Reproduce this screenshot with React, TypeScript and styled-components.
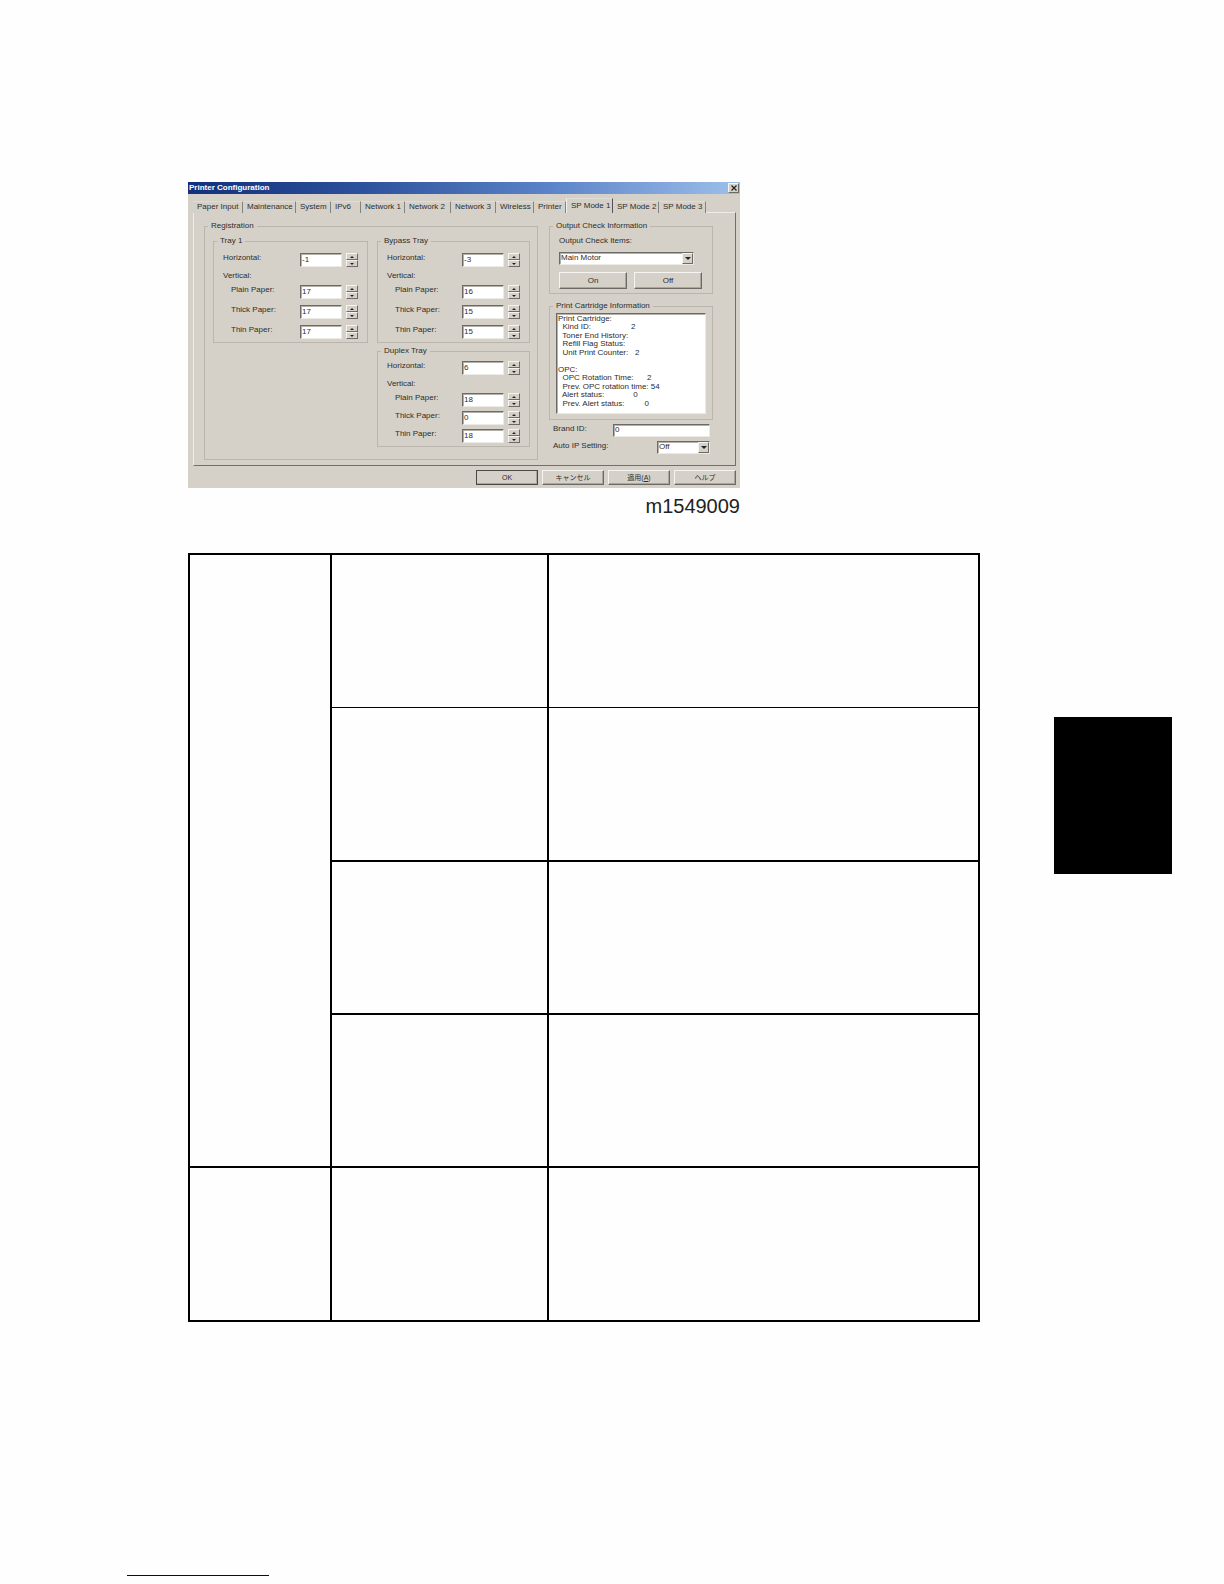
import React, { useId, useState } from "react";
import styled, { createGlobalStyle, css } from "styled-components";

const face = "#d5d1c9";
const shade = "#85827c";
const ink = "#2e2d2b";
const uiFont = `"Liberation Sans", Arial, "Noto Sans CJK JP", sans-serif`;

const GlobalStyle = createGlobalStyle`
  *, *::before, *::after { box-sizing: border-box; }
  body { margin: 0; background: #fefefe; font-family: ${uiFont}; }
  button, input, select { font: inherit; color: inherit; margin: 0; }
`;

const raised = css`
  border: 1px solid;
  border-color: #f6f4f0 #6d6a65 #6d6a65 #f6f4f0;
  background: ${face};
`;

const sunken = css`
  border: 1px solid;
  border-color: #6d6a65 #eceae5 #eceae5 #6d6a65;
  box-shadow: inset 1px 1px 0 #b3b0aa;
  background: #fff;
`;

const Page = styled.div`
  display: flex;
  flex-direction: column;
  min-height: 100vh;
`;

const Body = styled.div`
  flex: 1;
  display: grid;
  grid-template-columns: minmax(0, 1fr) 118px;
  column-gap: 74px;
  align-items: start;
  padding: 182px 52px 0 188px;
`;

const ThumbIndex = styled.aside`
  height: 157px;
  margin-top: 535px;
  background: #000;
`;

const Figure = styled.figure`
  margin: 0;
  max-width: 552px;
`;

const Caption = styled.figcaption`
  margin-top: 6px;
  font-size: 20px;
  line-height: 24px;
  text-align: right;
  color: #222;
`;

const Dialog = styled.section`
  background: ${face};
  color: ${ink};
  font-size: 8px;
  line-height: 10px;
`;

const TitleBar = styled.header`
  display: flex;
  align-items: center;
  justify-content: space-between;
  height: 12px;
  padding: 0 1px;
  background: linear-gradient(90deg, #12307c 0%, #2b4f9a 30%, #5b82c8 65%, #9dbfea 100%);
`;

const Title = styled.h1`
  margin: 0;
  font-size: 8px;
  line-height: 10px;
  font-weight: 700;
  color: #fff;
`;

const CloseButton = styled.button`
  ${raised}
  display: grid;
  place-items: center;
  width: 11px;
  height: 10px;
  padding: 0;
`;

const TabList = styled.div`
  display: grid;
  grid-template-columns: 50fr 53fr 35fr 30fr 44fr 46fr 45fr 38fr 32fr 47fr 46fr 47fr 30fr;
  align-items: end;
  height: 19px;
  margin: 0 4px -1px 5px;
`;

const Tab = styled.button<{ $active: boolean }>`
  height: ${(p) => (p.$active ? 15 : 12)}px;
  padding: 0 0 1px 4px;
  border: 0;
  border-right: 1px solid ${shade};
  border-top: 1px solid #e0ddd7;
  background: ${face};
  text-align: left;
  white-space: nowrap;
  ${(p) =>
    p.$active &&
    css`
      border-left: 1px solid #f2f0ec;
      border-right-color: #55534f;
      position: relative;
    `}
`;

const Panel = styled.div`
  display: grid;
  grid-template-columns: minmax(0, 334fr) minmax(0, 164fr);
  column-gap: 11px;
  margin: 0 4px 0 5px;
  padding: 8px 22px 5px 10px;
  border: 1px solid;
  border-color: #efede8 #73706b #73706b #efede8;
`;

const Group = styled.fieldset`
  min-width: 0;
  margin: 0;
  padding: 0;
  border: 1px solid #bab6ae;
`;

const Legend = styled.legend`
  margin-left: 3px;
  padding: 0 3px;
  line-height: 10px;
`;

const Registration = styled.div`
  display: grid;
  grid-template-columns: minmax(0, 155fr) minmax(0, 153fr);
  column-gap: 9px;
  align-items: start;
  padding: 5px 7px 12px 8px;
`;

const Stack = styled.div<{ $gap: number }>`
  display: flex;
  flex-direction: column;
  gap: ${(p) => p.$gap}px;
`;

const TrayFields = styled.div<{ $tight?: boolean }>`
  display: flex;
  flex-direction: column;
  gap: 4px;
  padding: ${(p) => (p.$tight ? 5 : 7)}px 9px 3px;
`;

const SizeFields = styled.div<{ $tight?: boolean }>`
  display: flex;
  flex-direction: column;
  gap: ${(p) => (p.$tight ? 4 : 6)}px;
  padding-left: 8px;
`;

const FieldRow = styled.div`
  display: grid;
  grid-template-columns: minmax(0, 1fr) 42px 12px;
  column-gap: 4px;
  align-items: start;
  white-space: nowrap;
`;

const TextField = styled.input`
  ${sunken}
  width: 100%;
  height: 14px;
  padding: 0 1px 2px;
  border-radius: 0;
`;

const Spinner = styled.span`
  display: grid;
  grid-template-rows: 7px 7px;
`;

const SpinButton = styled.button`
  ${raised}
  display: grid;
  place-items: center;
  padding: 0;
`;

const OutputFields = styled.div`
  display: flex;
  flex-direction: column;
  padding: 5px 9px 4px;
`;

const SelectBox = styled.span<{ $width: number }>`
  ${sunken}
  display: flex;
  position: relative;
  width: ${(p) => p.$width}px;
  height: 13px;
`;

const Select = styled.select`
  flex: 1;
  min-width: 0;
  padding: 0 12px 1px 1px;
  border: 0;
  background: transparent;
  appearance: none;
`;

const SelectArrow = styled.span`
  ${raised}
  position: absolute;
  top: 0;
  right: 0;
  display: grid;
  place-items: center;
  width: 11px;
  height: 11px;
  pointer-events: none;
`;

const ButtonPair = styled.div`
  display: grid;
  grid-template-columns: 68px 68px;
  column-gap: 7px;
  margin-top: 7px;
`;

const PushButton = styled.button<{ $tall?: boolean; $primary?: boolean }>`
  ${raised}
  height: ${(p) => (p.$tall ? 17 : 15)}px;
  padding: 0;
  font-size: ${(p) => (p.$tall ? 8 : 7)}px;
  line-height: 10px;
  box-shadow: inset -1px -1px 0 #aaa69f;
  ${(p) => p.$primary && css`border-color: #4a4845;`}
`;

const Readout = styled.ul`
  ${sunken}
  display: grid;
  grid-auto-rows: 1fr;
  height: 101px;
  margin: 2px 6px 5px;
  padding: 1px 1px 5px;
  list-style: none;
  line-height: 8px;
  white-space: pre;
`;

const SettingRow = styled.div`
  display: flex;
  justify-content: space-between;
  align-items: start;
  height: 13px;
  padding: 0 3px 0 4px;

  label { line-height: 10px; }
`;

const BrandField = styled(TextField)`
  width: 97px;
  height: 13px;
`;

const DialogFooter = styled.footer`
  display: grid;
  grid-template-columns: repeat(4, 62px);
  column-gap: 4px;
  justify-content: end;
  padding: 4px 4px 3px;
`;

const Spec = styled.table`
  width: 100%;
  margin-top: 35px;
  table-layout: fixed;
  border-collapse: separate;
  border-spacing: 0;
  border: solid #000;
  border-width: 2px 0 0 2px;
`;

const SpecRow = styled.tr<{ $height: number }>`
  height: ${(p) => p.$height}px;
`;

const SpecCell = styled.td<{ $thin?: boolean }>`
  padding: 0;
  border: solid #000;
  border-width: 0 2px ${(p) => (p.$thin ? 1 : 2)}px 0;
`;

const SpecCol = styled.col<{ $width: string }>`
  width: ${(p) => p.$width};
`;

const FootRule = styled.hr`
  width: 142px;
  height: 1px;
  margin: 0 0 8px 127px;
  border: 0;
  background: #00007a;
`;

const Triangle = ({ up = false, size = 4 }: { up?: boolean; size?: number }) => (
  <svg width={size} height={size / 2} viewBox="0 0 4 2" aria-hidden="true">
    <path d={up ? "M0 2L2 0L4 2Z" : "M0 0L2 2L4 0Z"} fill="#222" />
  </svg>
);

function NumberField({ label, initial }: { label: string; initial: string }) {
  const id = useId();
  const [value, setValue] = useState(initial);
  const step = (by: number) => setValue(String((Number(value) || 0) + by));
  return (
    <FieldRow>
      <label htmlFor={id}>{label}</label>
      <TextField id={id} value={value} onChange={(e) => setValue(e.target.value)} />
      <Spinner>
        <SpinButton type="button" aria-label="Increase" onClick={() => step(1)}>
          <Triangle up />
        </SpinButton>
        <SpinButton type="button" aria-label="Decrease" onClick={() => step(-1)}>
          <Triangle />
        </SpinButton>
      </Spinner>
    </FieldRow>
  );
}

type TrayProps = { name: string; horizontal: string; sizes: string[]; tight?: boolean };

const Tray = ({ name, horizontal, sizes, tight }: TrayProps) => (
  <Group>
    <Legend>{name}</Legend>
    <TrayFields $tight={tight}>
      <NumberField label="Horizontal:" initial={horizontal} />
      <span>Vertical:</span>
      <SizeFields $tight={tight}>
        <NumberField label="Plain Paper:" initial={sizes[0]} />
        <NumberField label="Thick Paper:" initial={sizes[1]} />
        <NumberField label="Thin Paper:" initial={sizes[2]} />
      </SizeFields>
    </TrayFields>
  </Group>
);

const DropDown = ({ id, width, option }: { id: string; width: number; option: string }) => (
  <SelectBox $width={width}>
    <Select id={id}>
      <option>{option}</option>
    </Select>
    <SelectArrow>
      <Triangle size={6} />
    </SelectArrow>
  </SelectBox>
);

const tabs = [
  "Paper Input", "Maintenance", "System", "IPv6", "Network 1", "Network 2",
  "Network 3", "Wireless", "Printer", "SP Mode 1", "SP Mode 2", "SP Mode 3",
];

const readout = [
  "Print Cartridge:",
  "  Kind ID:                  2",
  "  Toner End History:",
  "  Refill Flag Status:",
  "  Unit Print Counter:   2",
  " ",
  "OPC:",
  "  OPC Rotation Time:      2",
  "  Prev. OPC rotation time: 54",
  "  Alert status:             0",
  "  Prev. Alert status:         0",
];

export default function App() {
  const [active, setActive] = useState("SP Mode 1");
  return (
    <Page>
      <GlobalStyle />
      <Body>
        <main>
          <Figure>
            <Dialog aria-label="Printer Configuration">
              <TitleBar>
                <Title>Printer Configuration</Title>
                <CloseButton type="button" aria-label="Close">
                  <svg width="6" height="6" viewBox="0 0 6 6" aria-hidden="true">
                    <path d="M0.5 0.5L5.5 5.5M5.5 0.5L0.5 5.5" stroke="#222" strokeWidth="1.2" />
                  </svg>
                </CloseButton>
              </TitleBar>
              <TabList role="tablist">
                {tabs.map((tab) => (
                  <Tab
                    key={tab}
                    type="button"
                    role="tab"
                    aria-selected={tab === active}
                    $active={tab === active}
                    onClick={() => setActive(tab)}
                  >
                    {tab}
                  </Tab>
                ))}
              </TabList>
              <Panel role="tabpanel">
                <Group>
                  <Legend>Registration</Legend>
                  <Registration>
                    <Tray name="Tray 1" horizontal="-1" sizes={["17", "17", "17"]} />
                    <Stack $gap={3}>
                      <Tray name="Bypass Tray" horizontal="-3" sizes={["16", "15", "15"]} />
                      <Tray name="Duplex Tray" horizontal="6" sizes={["18", "0", "18"]} tight />
                    </Stack>
                  </Registration>
                </Group>
                <Stack $gap={4}>
                  <Stack $gap={7}>
                    <Group>
                      <Legend>Output Check Information</Legend>
                      <OutputFields>
                        <Stack $gap={6}>
                          <label htmlFor="check-items">Output Check Items:</label>
                          <DropDown id="check-items" width={135} option="Main Motor" />
                        </Stack>
                        <ButtonPair>
                          <PushButton type="button" $tall>On</PushButton>
                          <PushButton type="button" $tall>Off</PushButton>
                        </ButtonPair>
                      </OutputFields>
                    </Group>
                    <Group>
                      <Legend>Print Cartridge Information</Legend>
                      <Readout>
                        {readout.map((line, i) => (
                          <li key={i}>{line}</li>
                        ))}
                      </Readout>
                    </Group>
                  </Stack>
                  <SettingRow>
                    <label htmlFor="brand">Brand ID:</label>
                    <BrandField id="brand" defaultValue="0" />
                  </SettingRow>
                  <SettingRow>
                    <label htmlFor="auto-ip">Auto IP Setting:</label>
                    <DropDown id="auto-ip" width={53} option="Off" />
                  </SettingRow>
                </Stack>
              </Panel>
              <DialogFooter>
                <PushButton type="button" $primary>OK</PushButton>
                <PushButton type="button">キャンセル</PushButton>
                <PushButton type="button">適用(<u>A</u>)</PushButton>
                <PushButton type="button">ヘルプ</PushButton>
              </DialogFooter>
            </Dialog>
            <Caption>m1549009</Caption>
          </Figure>
          <Spec>
            <colgroup>
              <SpecCol $width="18%" />
              <SpecCol $width="27.5%" />
              <col />
            </colgroup>
            <tbody>
              <SpecRow $height={153}>
                <SpecCell rowSpan={4} />
                <SpecCell $thin />
                <SpecCell $thin />
              </SpecRow>
              {[154, 153, 153].map((height, i) => (
                <SpecRow key={i} $height={height}>
                  <SpecCell />
                  <SpecCell />
                </SpecRow>
              ))}
              <SpecRow $height={154}>
                <SpecCell />
                <SpecCell />
                <SpecCell />
              </SpecRow>
            </tbody>
          </Spec>
        </main>
        <ThumbIndex />
      </Body>
      <FootRule />
    </Page>
  );
}
